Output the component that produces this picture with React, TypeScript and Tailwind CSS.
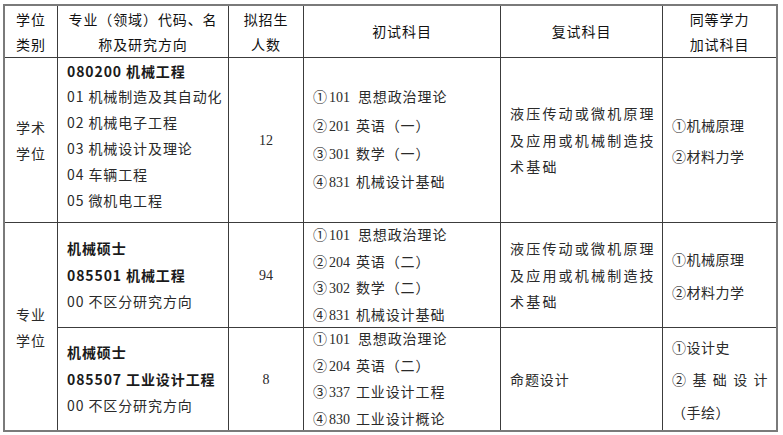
import React from "react";

const cjk = "font-['Noto_Sans_CJK_SC','Noto_Sans_CJK_JP',sans-serif]";
const serif = "font-['Liberation_Serif','Noto_Sans_CJK_SC',serif]";

function Cell({ className = "", children }: { className?: string; children?: React.ReactNode }) {
  return <div className={`bg-white flex flex-col ${className}`}>{children}</div>;
}

function Header({ lines }: { lines: string[] }) {
  return (
    <Cell className="items-center justify-center text-[#111] leading-[25px] tracking-[0.9px]">
      {lines.map((l, i) => (
        <div key={i}>{l}</div>
      ))}
    </Cell>
  );
}

function Exam({ n, code, text, gap = "ml-[6px]" }: { n: string; code: string; text: React.ReactNode; gap?: string }) {
  return (
    <div className="flex items-baseline whitespace-nowrap">
      <span>{n}</span>
      <span className={`${serif} tracking-normal ml-[1px]`}>{code}</span>
      <span className={gap}>{text}</span>
    </div>
  );
}

export default function App() {
  return (
    <div className={`${cjk} text-[14px] text-[#2a2a2a] tracking-[0.9px] pl-[3px] pt-[4px] bg-white w-[783px] h-[435px]`}>
      <div className="grid grid-cols-[52px_170px_74px_196px_161px_113px] grid-rows-[51px_164px_104px_102px] gap-px bg-[#3c3c3c] border-2 border-[#7a7a7a] w-[775px]">
        {/* Header */}
        <Header lines={["学位", "类别"]} />
        <Header lines={["专业（领域）代码、名", "称及研究方向"]} />
        <Header lines={["拟招生", "人数"]} />
        <Header lines={["初试科目"]} />
        <Header lines={["复试科目"]} />
        <Header lines={["同等学力", "加试科目"]} />

        {/* Row 1 */}
        <Cell className="items-center justify-center leading-[26px]">
          <div>学术</div>
          <div>学位</div>
        </Cell>
        <Cell className="justify-center pl-[9px] pb-[8px] leading-[25.8px] whitespace-nowrap">
          <div className="font-bold text-[#1a1a1a]">080200 机械工程</div>
          <div>01 机械制造及其自动化</div>
          <div>02 机械电子工程</div>
          <div>03 机械设计及理论</div>
          <div>04 车辆工程</div>
          <div>05 微机电工程</div>
        </Cell>
        <Cell className={`items-center justify-center ${serif} tracking-normal`}>12</Cell>
        <Cell className="justify-center pl-[9px] leading-[26.3px]">
          <Exam n="①" code="101" text="思想政治理论" gap="ml-[8px]" />
          <Exam n="②" code="201" text="英语（一）" />
          <Exam n="③" code="301" text="数学（一）" />
          <Exam n="④" code="831" text="机械设计基础" />
        </Cell>
        <Cell className="justify-center pl-[9px] leading-[26.5px] tracking-[2.2px] whitespace-nowrap">
          <div>液压传动或微机原理</div>
          <div>及应用或机械制造技</div>
          <div>术基础</div>
        </Cell>
        <Cell className="justify-center pl-[9px] leading-[26px] gap-[5px] tracking-[0.5px]">
          <div>①机械原理</div>
          <div>②材料力学</div>
        </Cell>

        {/* Row 2-3, col 1 */}
        <Cell className="row-span-2 items-center justify-center leading-[26px]">
          <div>专业</div>
          <div>学位</div>
        </Cell>

        {/* Row 2 */}
        <Cell className="justify-center pl-[9px] leading-[26.5px] whitespace-nowrap">
          <div className="font-bold text-[#1a1a1a]">机械硕士</div>
          <div className="font-bold text-[#1a1a1a]">085501 机械工程</div>
          <div>00 不区分研究方向</div>
        </Cell>
        <Cell className={`items-center justify-center ${serif} tracking-normal`}>94</Cell>
        <Cell className="justify-center pl-[9px] leading-[25.5px]">
          <Exam n="①" code="101" text="思想政治理论" gap="ml-[8px]" />
          <Exam n="②" code="204" text="英语（二）" />
          <Exam n="③" code="302" text="数学（二）" />
          <Exam n="④" code="831" text="机械设计基础" />
        </Cell>
        <Cell className="justify-center pl-[9px] leading-[26.5px] tracking-[2.2px] whitespace-nowrap">
          <div>液压传动或微机原理</div>
          <div>及应用或机械制造技</div>
          <div>术基础</div>
        </Cell>
        <Cell className="justify-center pl-[9px] leading-[26px] gap-[7px] tracking-[0.5px]">
          <div>①机械原理</div>
          <div>②材料力学</div>
        </Cell>

        {/* Row 3 */}
        <Cell className="justify-center pl-[9px] leading-[26.5px] whitespace-nowrap">
          <div className="font-bold text-[#1a1a1a]">机械硕士</div>
          <div className="font-bold text-[#1a1a1a]">085507 工业设计工程</div>
          <div>00 不区分研究方向</div>
        </Cell>
        <Cell className={`items-center justify-center ${serif} tracking-normal`}>8</Cell>
        <Cell className="justify-center pl-[9px] leading-[25.5px]">
          <Exam n="①" code="101" text="思想政治理论" gap="ml-[8px]" />
          <Exam n="②" code="204" text="英语（二）" />
          <Exam n="③" code="337" text="工业设计工程" />
          <Exam n="④" code="830" text="工业设计概论" />
        </Cell>
        <Cell className="justify-center pl-[9px] leading-[26px]">
          <div>命题设计</div>
        </Cell>
        <Cell className="justify-center pl-[9px] pr-[8px] leading-[26px] gap-[6.5px] tracking-[0.5px]">
          <div>①设计史</div>
          <div className="flex justify-between">
            <span>②</span>
            <span>基</span>
            <span>础</span>
            <span>设</span>
            <span>计</span>
          </div>
          <div>（手绘）</div>
        </Cell>
      </div>
    </div>
  );
}
